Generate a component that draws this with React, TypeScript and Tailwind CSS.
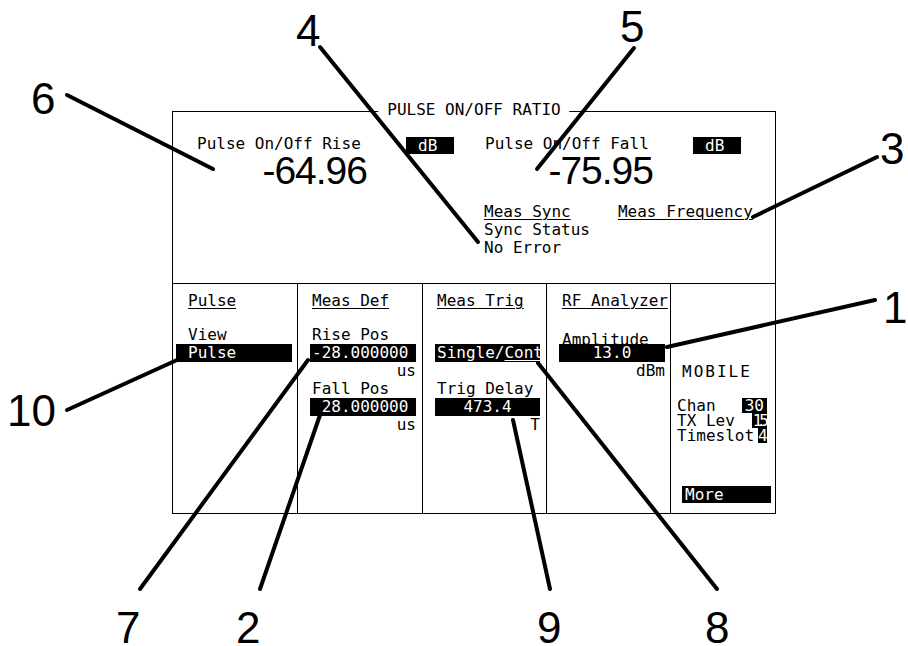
import React from "react";

const mono = "font-['DejaVu_Sans_Mono',monospace] text-[16px] leading-[18px]";

const callouts = [
  { n: "6", pos: "left-[31px] top-[77px]" },
  { n: "4", pos: "left-[296px] top-[9px]" },
  { n: "5", pos: "left-[620px] top-[5px]" },
  { n: "3", pos: "left-[880px] top-[127px]" },
  { n: "1", pos: "left-[883px] top-[286px]" },
  { n: "10", pos: "left-[7px] top-[389px]" },
  { n: "7", pos: "left-[116px] top-[606px]" },
  { n: "2", pos: "left-[236px] top-[606px]" },
  { n: "9", pos: "left-[537px] top-[606px]" },
  { n: "8", pos: "left-[705px] top-[606px]" },
];

const leaders: [number, number, number, number][] = [
  [67, 95, 213, 169],
  [320, 47, 478, 242],
  [634, 48, 537, 169],
  [877, 157, 753, 217],
  [875, 300, 667, 347],
  [67, 410, 177, 360],
  [140, 589, 308, 360],
  [260, 589, 320, 415],
  [550, 589, 513, 420],
  [717, 589, 538, 363],
];

function Bar({ children, className = "" }: { children: React.ReactNode; className?: string }) {
  return <div className={`h-[18px] bg-black text-white whitespace-pre ${className}`}>{children}</div>;
}

function Heading({ children, className = "" }: { children: React.ReactNode; className?: string }) {
  return (
    <div className={`whitespace-pre ${className}`}>
      <span className="underline underline-offset-2 decoration-1">{children}</span>
    </div>
  );
}

function Reading({ label, value, width }: { label: string; value: string; width: string }) {
  return (
    <div className={width}>
      <div className="whitespace-pre">{label}</div>
      <div className="mt-[-2px] text-right font-['Liberation_Sans',Arial,sans-serif] text-[39px] leading-[39px] tracking-[-1px]">
        {value}
      </div>
    </div>
  );
}

function UnitBox() {
  return <div className="mt-[2px] h-[17px] w-[48px] bg-black pl-[12px] leading-[17px] text-white">dB</div>;
}

function Screen() {
  return (
    <div className={`relative flex h-[403px] w-[604px] flex-col border border-black ${mono}`}>
      {/* title sits on the top border */}
      <div className="absolute left-1/2 top-[-11px] -translate-x-1/2 bg-white px-[9px] whitespace-pre">
        PULSE ON/OFF RATIO
      </div>

      {/* measurement area */}
      <div className="h-[172px] border-b border-black pl-[24px] pt-[23px]">
        <div className="flex items-start">
          <Reading label="Pulse On/Off Rise" value="-64.96" width="w-[170px]" />
          <div className="ml-[39px]">
            <UnitBox />
          </div>
          <div className="ml-[31px]">
            <Reading label="Pulse On/Off Fall" value="-75.95" width="w-[168px]" />
          </div>
          <div className="ml-[40px]">
            <UnitBox />
          </div>
        </div>
        <div className="ml-[287px] mt-[13px] flex items-start">
          <div>
            <Heading>Meas Sync</Heading>
            <div>Sync Status</div>
            <div>No Error</div>
          </div>
          <Heading className="ml-[28px]">Meas Frequency</Heading>
        </div>
      </div>

      {/* softkey columns */}
      <div className="flex flex-1">
        <div className="w-[125px] border-r border-black pl-[3px] pr-[5px] pt-[8px]">
          <Heading className="pl-[12px]">Pulse</Heading>
          <div className="mt-[16px] pl-[12px]">View</div>
          <Bar className="pl-[12px]">Pulse</Bar>
        </div>

        <div className="w-[125px] border-r border-black pl-[12px] pr-[6px] pt-[8px]">
          <Heading className="pl-[2px]">Meas Def</Heading>
          <div className="mt-[16px] pl-[2px]">Rise Pos</div>
          <Bar className="pl-[2px]">-28.000000</Bar>
          <div className="text-right">us</div>
          <div className="pl-[2px]">Fall Pos</div>
          <Bar className="pl-[2px]"> 28.000000</Bar>
          <div className="text-right">us</div>
        </div>

        <div className="w-[124px] border-r border-black pl-[12px] pr-[6px] pt-[8px]">
          <Heading className="pl-[2px]">Meas Trig</Heading>
          <Bar className="mt-[34px] pl-[2px]">
            Single/<span className="underline underline-offset-2 decoration-1">Cont</span>
          </Bar>
          <div className="mt-[18px] pl-[2px]">Trig Delay</div>
          <Bar className="text-center">473.4</Bar>
          <div className="text-right">T</div>
        </div>

        <div className="w-[124px] border-r border-black pl-[12px] pr-[5px] pt-[8px]">
          <Heading className="pl-[3px]">RF Analyzer</Heading>
          <div className="mt-[16px] h-[18px] whitespace-pre pl-[3px] leading-[28px]">Amplitude</div>
          <Bar className="text-center">13.0</Bar>
          <div className="text-right">dBm</div>
        </div>

        <div className="flex flex-1 flex-col pt-[79px]">
          <div className="pl-[11px] tracking-[2px]">MOBILE</div>
          <div className="mt-[17px] flex flex-col pl-[6px] pr-[8px] leading-[15px]">
            <div className="flex justify-between">
              <span>Chan</span>
              <span className="h-[15px] bg-black px-[3px] text-white">30</span>
            </div>
            <div className="flex justify-between">
              <span className="whitespace-pre">TX Lev</span>
              <span className="h-[15px] bg-black px-[1px] tracking-[-3px] text-white">15</span>
            </div>
            <div className="flex justify-between">
              <span>Timeslot</span>
              <span className="h-[15px] w-[9px] overflow-hidden bg-black text-white">4</span>
            </div>
          </div>
          <div className="mb-[10px] ml-[11px] mr-[4px] mt-auto h-[17px] bg-black pl-[3px] leading-[17px] text-white">
            More
          </div>
        </div>
      </div>
    </div>
  );
}

export default function App() {
  return (
    <div className="relative h-[646px] w-[908px] overflow-hidden bg-white text-black">
      <div className="pl-[172px] pt-[111px]">
        <Screen />
      </div>

      <svg className="pointer-events-none absolute left-0 top-0" width="908" height="646" viewBox="0 0 908 646">
        {leaders.map(([x1, y1, x2, y2], i) => (
          <line key={i} x1={x1} y1={y1} x2={x2} y2={y2} stroke="black" strokeWidth="4" strokeLinecap="round" />
        ))}
      </svg>

      {callouts.map((c) => (
        <div
          key={c.n}
          className={`absolute font-['Liberation_Sans',Arial,sans-serif] text-[44px] leading-[44px] ${c.pos}`}
        >
          {c.n}
        </div>
      ))}
    </div>
  );
}
